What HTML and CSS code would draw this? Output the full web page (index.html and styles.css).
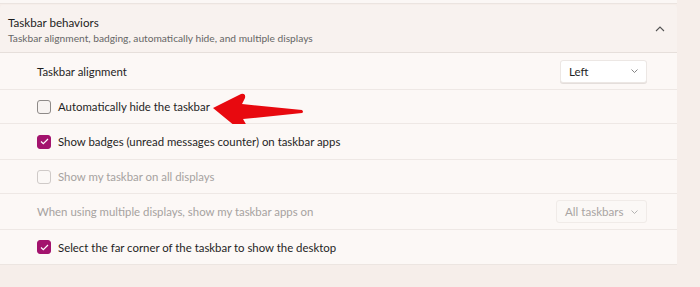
FILE: index.html
```html
<!DOCTYPE html>
<html>
<head>
<meta charset="utf-8">
<link rel="stylesheet" href="styles.css">
</head>
<body>
<div class="page">
  <div class="prev-card"></div>
  <div class="group">
    <div class="header">
      <div class="htext">
        <div class="title">Taskbar behaviors</div>
        <div class="sub">Taskbar alignment, badging, automatically hide, and multiple displays</div>
      </div>
      <svg class="chev-up" width="10" height="6" viewBox="0 0 10 6"><path d="M1 5 L5 1 L9 5" fill="none" stroke="#555" stroke-width="1.1"/></svg>
    </div>
    <div class="row r1">
      <span class="label">Taskbar alignment</span>
      <div class="select"><span>Left</span><svg width="7" height="4" viewBox="0 0 7 4"><path d="M0.5 0.5 L3.5 3.5 L6.5 0.5" fill="none" stroke="#777" stroke-width="0.9"/></svg></div>
    </div>
    <div class="row r2">
      <label class="check"><span class="box"></span><span class="label">Automatically hide the taskbar</span></label>
      <svg class="arrow" width="100" height="40" viewBox="0 0 100 40"><path d="M3 15 L31 1 Q36 0 35 5 L32 11 L92 17 Q94 19 92 20 L33 26 L37 33 Q38 39 31 38 Z" fill="#e8090f"/></svg>
    </div>
    <div class="row r3">
      <label class="check"><span class="box on"><svg width="9" height="7" viewBox="0 0 9 7"><path d="M1 3.5 L3.3 5.7 L8 1" fill="none" stroke="#fff" stroke-width="1.2"/></svg></span><span class="label">Show badges (unread messages counter) on taskbar apps</span></label>
    </div>
    <div class="row r4">
      <label class="check dis"><span class="box"></span><span class="label">Show my taskbar on all displays</span></label>
    </div>
    <div class="row r5">
      <span class="label dim">When using multiple displays, show my taskbar apps on</span>
      <div class="select dis"><span>All taskbars</span><svg width="7" height="4" viewBox="0 0 7 4"><path d="M0.5 0.5 L3.5 3.5 L6.5 0.5" fill="none" stroke="#aaa" stroke-width="0.9"/></svg></div>
    </div>
    <div class="row r6">
      <label class="check"><span class="box on"><svg width="9" height="7" viewBox="0 0 9 7"><path d="M1 3.5 L3.3 5.7 L8 1" fill="none" stroke="#fff" stroke-width="1.2"/></svg></span><span class="label">Select the far corner of the taskbar to show the desktop</span></label>
    </div>
  </div>
</div>
</body>
</html>
```

FILE: styles.css
```css
html, body {
  margin: 0;
  padding: 0;
  background: #f6eeea;
}
body {
  font-family: Lato, "Noto Sans", sans-serif;
  color: #1f1f1f;
  width: 700px;
  height: 287px;
  overflow: hidden;
}
.page {
  width: 677px;
}
.prev-card {
  height: 3px;
  background: #fbf7f5;
  border-bottom: 1px solid #ebe4e0;
  margin-bottom: 1px;
}
.group {
  display: flex;
  flex-direction: column;
}
.header {
  height: 47px;
  background: #f8f2ef;
  border-bottom: 1px solid #e6dfdb;
  display: flex;
  align-items: center;
  justify-content: space-between;
  padding: 0 10px 0 8px;
  border-radius: 3px 3px 0 0;
}
.htext {
  padding-top: 2px;
}
.title {
  font-size: 11.6px;
  line-height: 16px;
  color: #1d1d1d;
}
.sub {
  font-size: 10.2px;
  line-height: 14px;
  color: #666;
}
.chev-up {
  margin-right: 2px;
}
.row {
  position: relative;
  background: #fcf8f6;
  border-bottom: 1px solid #eee8e5;
  display: flex;
  align-items: center;
  justify-content: space-between;
  padding: 0 30px 0 37px;
}
.r1 { height: 36px; }
.r2 { height: 33px; }
.r3 { height: 35px; }
.r4 { height: 33px; }
.r5 { height: 35px; }
.r6 { height: 34px; border-bottom-color: #ece5e1; }
.label {
  font-size: 11.4px;
  color: #1f1f1f;
}
.label.dim, .dis .label {
  color: #a6a2a0;
}
.check {
  display: flex;
  align-items: center;
  gap: 7px;
}
.box {
  width: 12px;
  height: 12px;
  border: 1px solid #8e8a88;
  border-radius: 3px;
  background: #f7f3f1;
  display: flex;
  align-items: center;
  justify-content: center;
}
.dis .box {
  border-color: #cfcac8;
  background: #fbf8f6;
}
.box.on {
  background: #a3136e;
  border-color: #a3136e;
}
.select {
  width: 87px;
  height: 23px;
  box-sizing: border-box;
  background: #fff;
  border: 1px solid #ece7e4;
  border-radius: 3px;
  display: flex;
  align-items: center;
  justify-content: space-between;
  padding: 0 8px 0 8px;
  font-size: 11.6px;
  box-shadow: 0 1px 0 #e4dedb;
}
.select.dis {
  width: 91px;
  background: #fbf8f6;
  color: #a9a5a3;
  box-shadow: none;
  border-color: #f0ebe8;
}
.arrow {
  position: absolute;
  left: 210px;
  top: 3px;
}
```
